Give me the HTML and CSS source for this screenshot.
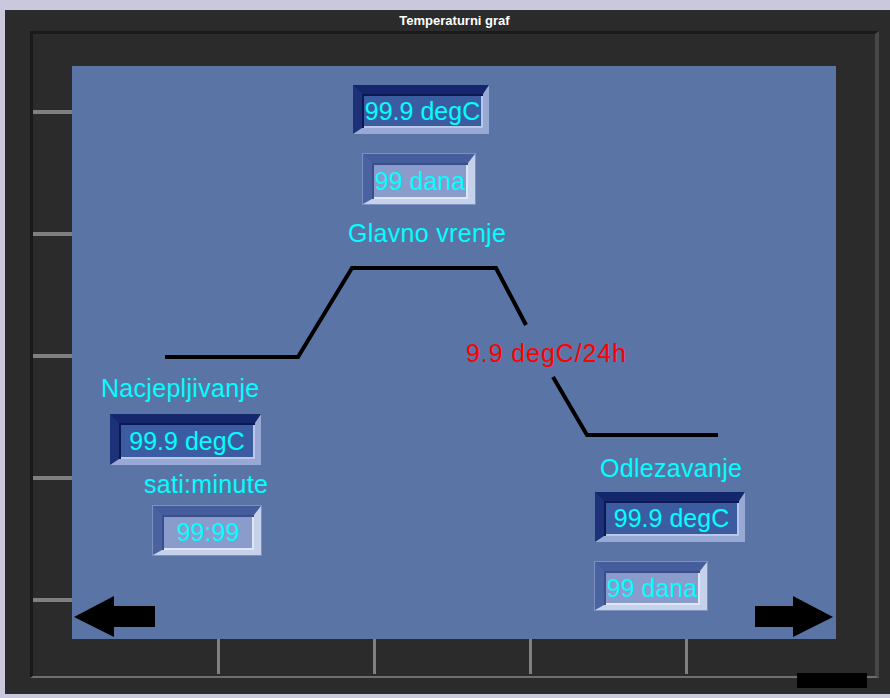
FILE: index.html
```html
<!DOCTYPE html>
<html lang="hr">
<head>
    <meta charset="UTF-8">
    <title>Temperaturni graf</title>
    <link rel="stylesheet" href="styles.css">
</head>
<body>
    <div class="panel">
        <div class="title">Temperaturni graf</div>
        <div class="frame">
            <div class="y-axis">
                <span class="tick-h"></span>
                <span class="tick-h"></span>
                <span class="tick-h"></span>
                <span class="tick-h"></span>
                <span class="tick-h"></span>
            </div>

            <div class="plot">
                <!-- krivulja temperature -->
                <svg class="curve" width="764" height="573" viewBox="0 0 764 573">
                    <polyline points="93,291 226,291 280,202 424,202 454,259" />
                    <polyline points="481,311 515,369 646,369" />
                </svg>

                <div class="field dark f-top-temp">99.9 degC</div>
                <div class="field light f-top-days">99 dana</div>
                <div class="label l-glavno">Glavno vrenje</div>

                <div class="label l-nacj">Nacjepljivanje</div>
                <div class="field dark f-left-temp">99.9 degC</div>
                <div class="label l-sati">sati:minute</div>
                <div class="field light f-left-time">99:99</div>

                <div class="label red l-rate">9.9 degC/24h</div>

                <div class="label l-odlez">Odlezavanje</div>
                <div class="field dark f-right-temp">99.9 degC</div>
                <div class="field light f-right-days">99 dana</div>

                <button class="nav nav-prev" title="Nazad">
                    <svg width="81" height="41" viewBox="0 0 81 41">
                        <polygon points="0,21 40,0 40,10 81,10 81,31 40,31 40,41" />
                    </svg>
                </button>
                <button class="nav nav-next" title="Naprijed">
                    <svg width="79" height="41" viewBox="0 0 79 41">
                        <polygon points="0,10 38,10 38,0 78,21 38,41 38,31 0,31" />
                    </svg>
                </button>
            </div>

            <div class="x-axis">
                <span class="tick-v"></span>
                <span class="tick-v"></span>
                <span class="tick-v"></span>
                <span class="tick-v"></span>
            </div>
        </div>
        <div class="stray"></div>
    </div>
</body>
</html>
```

FILE: styles.css
```css
body {
    margin: 0;
    background: #cac8dd;
    font-family: "Liberation Sans", Arial, sans-serif;
}

.panel {
    position: relative;
    margin: 10px 0 0 5px;
    width: 885px;
    height: 684px;
    background: #2b2b2b;
}

.title {
    margin-left: 25px;
    width: 849px;
    height: 21px;
    line-height: 21px;
    text-align: center;
    color: #fff;
    font-size: 13px;
    font-weight: bold;
}

.frame {
    margin-left: 25px;
    width: 849px;
    height: 647px;
    box-sizing: border-box;
    border-top: 3px solid #1a1a1a;
    border-left: 3px solid #1a1a1a;
    border-right: 4px solid #474747;
    border-bottom: 2px solid #6f6f6f;
    display: grid;
    grid-template-columns: 39px 764px 39px;
    grid-template-rows: 32px 573px 37px;
}

.y-axis {
    grid-column: 1;
    grid-row: 2;
    display: flex;
    flex-direction: column;
    gap: 118px;
    padding-top: 44px;
}
.tick-h {
    display: block;
    height: 4px;
    background: #808080;
}

.x-axis {
    grid-column: 2;
    grid-row: 3;
    display: flex;
    gap: 153px;
    padding-left: 145px;
    padding-bottom: 2px;
}
.tick-v {
    display: block;
    width: 3px;
    background: #808080;
}

.plot {
    grid-column: 2;
    grid-row: 2;
    position: relative;
    background: #5a74a6;
}

.curve {
    position: absolute;
    left: 0;
    top: 0;
}
.curve polyline {
    fill: none;
    stroke: #000;
    stroke-width: 4;
}

.label {
    position: absolute;
    font-size: 25px;
    line-height: 25px;
    letter-spacing: 0.3px;
    color: #00ffff;
    white-space: nowrap;
}
.label.red {
    color: #ff0000;
    letter-spacing: 0.9px;
}
.l-glavno { left: 276px; top: 155px; }
.l-nacj   { left: 29px;  top: 310px; }
.l-sati   { left: 72px;  top: 406px; }
.l-rate   { left: 394px; top: 275px; }
.l-odlez  { left: 528px; top: 390px; }

.field {
    position: absolute;
    box-sizing: border-box;
    display: flex;
    align-items: center;
    justify-content: center;
    font-size: 25px;
    line-height: 25px;
    color: #00ffff;
    white-space: nowrap;
    border-style: solid;
}
.field.dark {
    background: #3c5ca2;
    border-width: 9px 6px 6px 9px;
    border-color: #15276c #97a9d4 #97a9d4 #1d3179;
    box-shadow: inset 2px 2px 0 #0b1852, inset -2px -2px 0 #bac7e6;
}
.field.light {
    background: #8a9ccb;
    border-width: 9px 7px 5px 9px;
    border-color: #455d9a #c6d1eb #c6d1eb #4a63a0;
    box-shadow: inset 2px 2px 0 #384e8d, inset -2px -2px 0 #dfe6f4, 0 0 0 1px #7d90c2;
}

.f-top-temp   { left: 281px; top: 19px;  width: 136px; height: 49px; }
.f-top-days   { left: 291px; top: 88px;  width: 112px; height: 50px; }
.f-left-temp  { left: 38px;  top: 348px; width: 151px; height: 51px; }
.f-left-time  { left: 81px;  top: 440px; width: 108px; height: 49px; }
.f-right-temp { left: 523px; top: 426px; width: 150px; height: 50px; }
.f-right-days { left: 523px; top: 496px; width: 112px; height: 48px; }

.nav {
    position: absolute;
    top: 530px;
    padding: 0;
    border: none;
    background: none;
    cursor: pointer;
}
.nav svg {
    display: block;
}
.nav polygon {
    fill: #000;
}
.nav-prev { left: 2px; }
.nav-next { left: 683px; }

.stray {
    position: absolute;
    left: 792px;
    top: 663px;
    width: 70px;
    height: 15px;
    background: #000;
}
```
